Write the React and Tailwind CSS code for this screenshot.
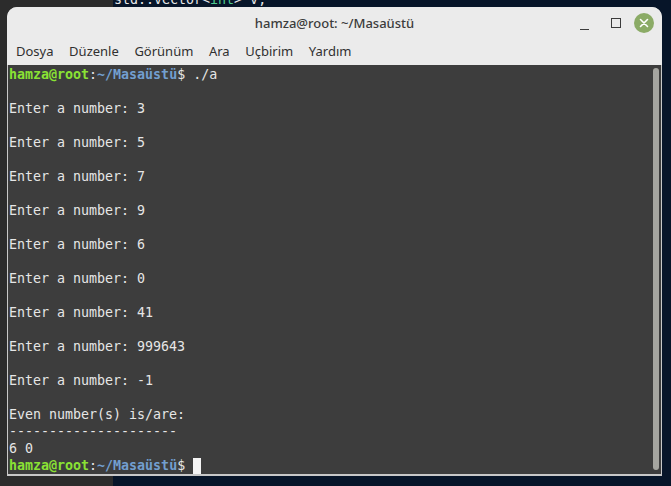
import React from "react";

const mono = { fontFamily: '"DejaVu Sans Mono", "Liberation Mono", monospace' };

function Prompt({ rest }) {
  return (
    <div>
      <span className="font-bold text-[#8ae234]">hamza@root</span>
      <span className="text-[#e6e6e6]">:</span>
      <span className="font-bold text-[#729fcf]">~/Masaüstü</span>
      <span className="text-[#e6e6e6]">{rest}</span>
    </div>
  );
}

export default function App() {
  const nums = ["3", "5", "7", "9", "6", "0", "41", "999643", "-1"];
  return (
    <div className="relative w-[671px] h-[486px] overflow-hidden flex" style={{ fontFamily: '"Noto Sans", sans-serif' }}>
      <div className="w-[113px] bg-[#2c2c2c]" />
      <div className="flex-1 bg-[#071529]">
        <div className="mt-[-9px] ml-[1px] text-[13.3px] leading-[17px] text-[#e8e8e8] whitespace-pre" style={mono}>
          std::vector&lt;<span className="text-[#4ec98f]">int</span>&gt; v;
        </div>
      </div>

      <div className="absolute left-[7px] top-[7px] w-[655px] h-[469px] flex flex-col rounded-t-[10px] overflow-hidden bg-[#c8c8c8]">
        <div className="h-[30px] bg-[#ebebeb] relative flex items-center justify-center pt-[3px]">
          <span className="text-[13px] text-[#3c3c3c] font-medium">hamza@root: ~/Masaüstü</span>
          <div className="absolute right-[8px] top-[6px] flex items-center">
            <div className="w-[32px] h-[20px] flex items-end justify-center pb-[3px]">
              <div className="w-[9px] h-[1.5px] bg-[#3c3c3c]" />
            </div>
            <div className="w-[32px] h-[20px] flex items-center justify-center">
              <div className="w-[10px] h-[10px] border border-[#3c3c3c]" />
            </div>
            <div className="w-[20px] h-[20px] rounded-full bg-[#8bab66] flex items-center justify-center ml-[2px]">
              <svg width="10" height="10" viewBox="0 0 10 10">
                <path d="M1.5 1.5 L8.5 8.5 M8.5 1.5 L1.5 8.5" stroke="#ffffff" strokeWidth="1.6" strokeLinecap="round" />
              </svg>
            </div>
          </div>
        </div>
        <div className="h-[28px] bg-[#ebebeb] flex items-center pl-[9px] pt-[2px] gap-[15.6px] text-[13px] text-[#303030]">
          <span>Dosya</span>
          <span>Düzenle</span>
          <span>Görünüm</span>
          <span>Ara</span>
          <span>Uçbirim</span>
          <span>Yardım</span>
        </div>
        <div className="flex-1 flex ml-[1px] mr-[1px] mb-[2px] bg-[#3d3d3d]">
          <div className="flex-1 pl-[1px] pt-[1px] text-[13.3px] leading-[17px] text-[#e6e6e6] whitespace-pre" style={mono}>
            <Prompt rest="$ ./a" />
            {nums.map((n) => (
              <React.Fragment key={n}>
                <div>&nbsp;</div>
                <div>Enter a number: {n}</div>
              </React.Fragment>
            ))}
            <div>&nbsp;</div>
            <div>Even number(s) is/are:</div>
            <div>---------------------</div>
            <div>6 0</div>
            <div className="flex items-center">
              <Prompt rest="$ " />
              <span className="inline-block w-[8px] h-[16px] bg-[#f4f4f4]" />
            </div>
          </div>
          <div className="w-[8px] flex justify-start pt-[3px] pb-[4px] bg-[#3d3d3d]">
            <div className="w-[6px] h-full rounded-[3px] bg-[#a5a5a0]" />
          </div>
        </div>
      </div>
    </div>
  );
}
